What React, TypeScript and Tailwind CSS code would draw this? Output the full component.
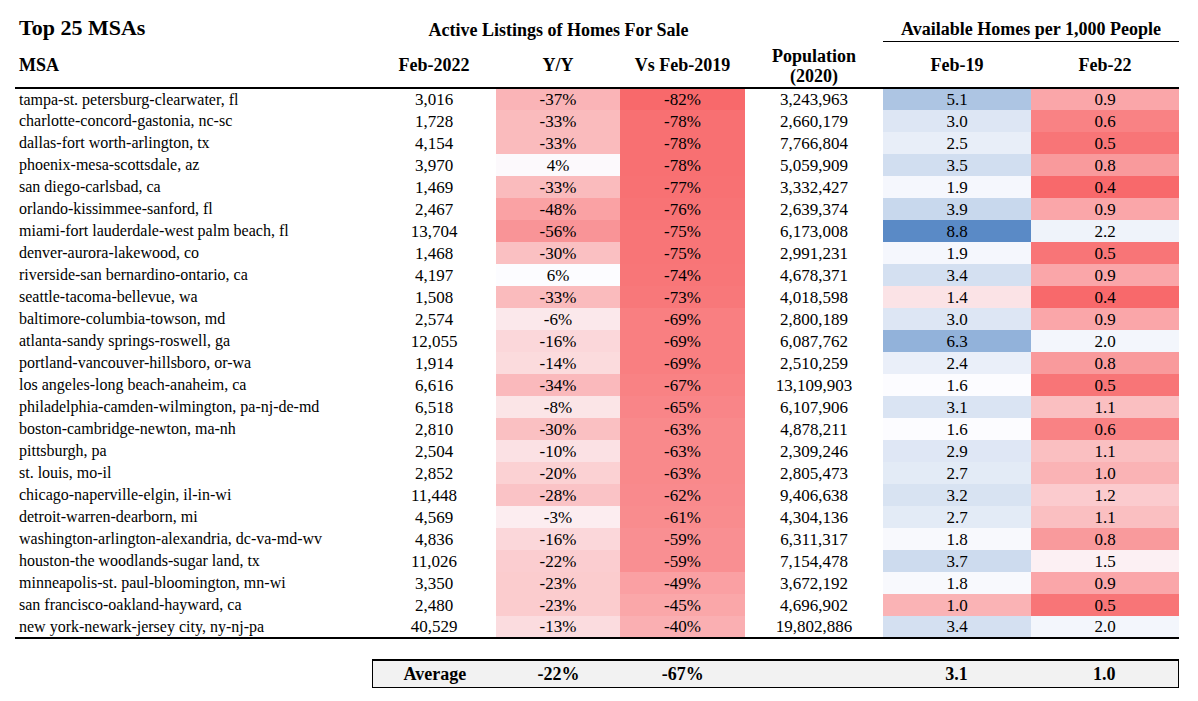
import React from 'react';

type Row = [string, string, number, number, string, number, number];

const rows: Row[] = [
  ['tampa-st. petersburg-clearwater, fl', '3,016', -37, -82, '3,243,963', 5.1, 0.9],
  ['charlotte-concord-gastonia, nc-sc', '1,728', -33, -78, '2,660,179', 3.0, 0.6],
  ['dallas-fort worth-arlington, tx', '4,154', -33, -78, '7,766,804', 2.5, 0.5],
  ['phoenix-mesa-scottsdale, az', '3,970', 4, -78, '5,059,909', 3.5, 0.8],
  ['san diego-carlsbad, ca', '1,469', -33, -77, '3,332,427', 1.9, 0.4],
  ['orlando-kissimmee-sanford, fl', '2,467', -48, -76, '2,639,374', 3.9, 0.9],
  ['miami-fort lauderdale-west palm beach, fl', '13,704', -56, -75, '6,173,008', 8.8, 2.2],
  ['denver-aurora-lakewood, co', '1,468', -30, -75, '2,991,231', 1.9, 0.5],
  ['riverside-san bernardino-ontario, ca', '4,197', 6, -74, '4,678,371', 3.4, 0.9],
  ['seattle-tacoma-bellevue, wa', '1,508', -33, -73, '4,018,598', 1.4, 0.4],
  ['baltimore-columbia-towson, md', '2,574', -6, -69, '2,800,189', 3.0, 0.9],
  ['atlanta-sandy springs-roswell, ga', '12,055', -16, -69, '6,087,762', 6.3, 2.0],
  ['portland-vancouver-hillsboro, or-wa', '1,914', -14, -69, '2,510,259', 2.4, 0.8],
  ['los angeles-long beach-anaheim, ca', '6,616', -34, -67, '13,109,903', 1.6, 0.5],
  ['philadelphia-camden-wilmington, pa-nj-de-md', '6,518', -8, -65, '6,107,906', 3.1, 1.1],
  ['boston-cambridge-newton, ma-nh', '2,810', -30, -63, '4,878,211', 1.6, 0.6],
  ['pittsburgh, pa', '2,504', -10, -63, '2,309,246', 2.9, 1.1],
  ['st. louis, mo-il', '2,852', -20, -63, '2,805,473', 2.7, 1.0],
  ['chicago-naperville-elgin, il-in-wi', '11,448', -28, -62, '9,406,638', 3.2, 1.2],
  ['detroit-warren-dearborn, mi', '4,569', -3, -61, '4,304,136', 2.7, 1.1],
  ['washington-arlington-alexandria, dc-va-md-wv', '4,836', -16, -59, '6,311,317', 1.8, 0.8],
  ['houston-the woodlands-sugar land, tx', '11,026', -22, -59, '7,154,478', 3.7, 1.5],
  ['minneapolis-st. paul-bloomington, mn-wi', '3,350', -23, -49, '3,672,192', 1.8, 0.9],
  ['san francisco-oakland-hayward, ca', '2,480', -23, -45, '4,696,902', 1.0, 0.5],
  ['new york-newark-jersey city, ny-nj-pa', '40,529', -13, -40, '19,802,886', 3.4, 2.0],
];

const RED = [248, 105, 107];
const WHITE = [252, 252, 255];
const BLUE = [90, 138, 198];

function mix(a: number[], b: number[], t: number) {
  const c = a.map((v, i) => Math.round(v + (b[i] - v) * t));
  return `rgb(${c[0]},${c[1]},${c[2]})`;
}

// red -> white, shared by both percent columns
function pctColor(v: number) {
  return mix(RED, WHITE, (v + 82) / 88);
}

// red -> white -> blue, shared by both per-1,000 columns
function perColor(v: number) {
  const mid = 1.6;
  if (v <= mid) return mix(RED, WHITE, (v - 0.4) / (mid - 0.4));
  return mix(WHITE, BLUE, (v - mid) / (8.8 - mid));
}

const fmt = (v: number) => `${v}%`;

export default function App() {
  return (
    <div
      className="w-[1198px] h-[701px] bg-white text-black pl-[15px] pt-[14px]"
      style={{ fontFamily: '"Liberation Serif", "DejaVu Serif", serif' }}
    >
      <table className="table-fixed border-collapse text-[17px] leading-none">
        <colgroup>
          <col className="w-[357px]" />
          <col className="w-[124px]" />
          <col className="w-[124px]" />
          <col className="w-[125px]" />
          <col className="w-[138px]" />
          <col className="w-[148px]" />
          <col className="w-[148px]" />
        </colgroup>
        <thead>
          <tr className="h-[27px] font-bold">
            <th className="text-left pl-[4px] text-[22px] align-middle">Top 25 MSAs</th>
            <th colSpan={3} className="text-[18px] align-middle pt-[4px]">Active Listings of Homes For Sale</th>
            <th />
            <th colSpan={2} className="text-[18px] align-middle pt-[4px] border-b border-black">
              Available Homes per 1,000 People
            </th>
          </tr>
          <tr className="h-[47px] font-bold text-[18px] border-b-2 border-black">
            <th className="text-left pl-[4px] pt-[2px]">MSA</th>
            <th className="pt-[2px]">Feb-2022</th>
            <th className="pt-[2px]">Y/Y</th>
            <th className="pt-[2px]">Vs Feb-2019</th>
            <th className="leading-[20px] pt-[3px]">
              Population
              <br />
              (2020)
            </th>
            <th className="pt-[2px]">Feb-19</th>
            <th className="pt-[2px]">Feb-22</th>
          </tr>
        </thead>
        <tbody className="border-b-2 border-black">
          {rows.map((r) => (
            <tr key={r[0]} className="h-[22px]">
              <td className="pl-[4px] whitespace-nowrap text-[16px]">{r[0]}</td>
              <td className="text-center">{r[1]}</td>
              <td className="text-center" style={{ backgroundColor: pctColor(r[2]) }}>
                {fmt(r[2])}
              </td>
              <td className="text-center" style={{ backgroundColor: pctColor(r[3]) }}>
                {fmt(r[3])}
              </td>
              <td className="text-center">{r[4]}</td>
              <td className="text-center" style={{ backgroundColor: perColor(r[5]) }}>
                {r[5].toFixed(1)}
              </td>
              <td className="text-center" style={{ backgroundColor: perColor(r[6]) }}>
                {r[6].toFixed(1)}
              </td>
            </tr>
          ))}
        </tbody>
      </table>

      <div className="ml-[357px] mt-[20px] w-[807px] h-[29px] flex items-center bg-[#f2f2f2] border border-black border-t-2 font-bold text-[18px]">
        <div className="w-[124px] text-center">Average</div>
        <div className="w-[124px] text-center">-22%</div>
        <div className="w-[125px] text-center">-67%</div>
        <div className="w-[138px]" />
        <div className="w-[148px] text-center">3.1</div>
        <div className="w-[148px] text-center">1.0</div>
      </div>
    </div>
  );
}
